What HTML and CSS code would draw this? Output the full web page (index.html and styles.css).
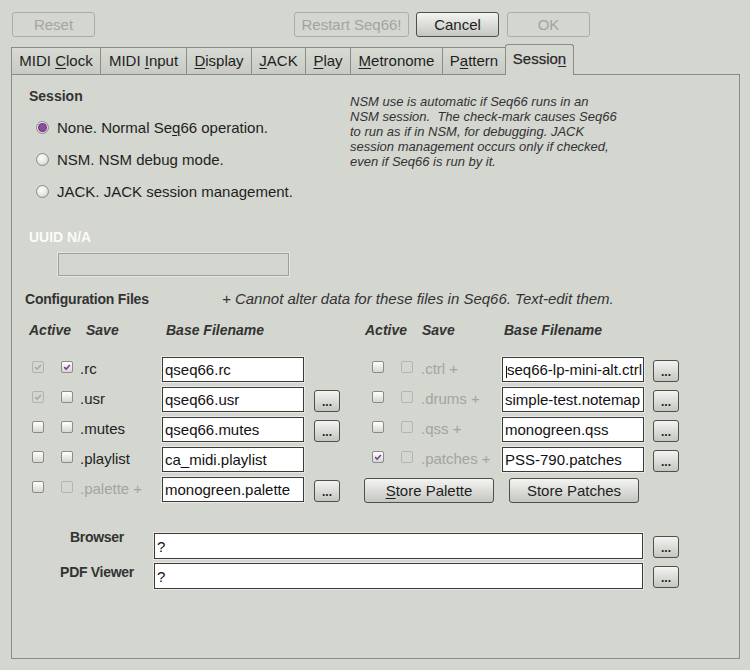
FILE: index.html
```html
<!DOCTYPE html>
<html>
<head>
<meta charset="utf-8">
<link rel="stylesheet" href="styles.css">
</head>
<body>
<div class="dialog">
  <div class="topbar">
    <div class="btn off w83">Reset</div>
    <div class="btn off restart">Restart Seq66!</div>
    <div class="btn on cancel">Cancel</div>
    <div class="btn off ok">OK</div>
  </div>
  <div class="tabs">
    <div class="tab t1"><span>MIDI <u>C</u>lock</span></div>
    <div class="tab t2"><span>MIDI <u>I</u>nput</span></div>
    <div class="tab t3"><span><u>D</u>isplay</span></div>
    <div class="tab t4"><span><u>J</u>ACK</span></div>
    <div class="tab t5"><span><u>P</u>lay</span></div>
    <div class="tab t6"><span><u>M</u>etronome</span></div>
    <div class="tab t7"><span>P<u>a</u>ttern</span></div>
    <div class="tab sel"><span>Sessio<u>n</u></span></div>
  </div>
  <div class="pane">
    <div class="session">
      <div class="sess-left">
        <div class="title">Session</div>
        <div class="radio-row"><span class="radio checked"></span><span>None. Normal Se<u>q</u>66 operation.</span></div>
        <div class="radio-row"><span class="radio"></span><span>NSM. NSM debug mode.</span></div>
        <div class="radio-row"><span class="radio"></span><span>JACK. JACK session management.</span></div>
      </div>
      <div class="note">NSM use is automatic if Seq66 runs in an<br>NSM session.&nbsp; The check-mark causes Seq66<br>to run as if in NSM, for debugging. JACK<br>session management occurs only if checked,<br>even if Seq66 is run by it.</div>
    </div>
    <div class="uuid">UUID N/A</div>
    <div class="uuid-box"></div>

    <div class="cfg-head">
      <span class="cfg-title">Configuration Files</span>
      <span class="cfg-note">+ Cannot alter data for these files in Seq66. Text-edit them.</span>
    </div>
    <div class="col-head">
      <span class="h-act">Active</span><span class="h-save">Save</span><span class="h-base">Base Filename</span>
      <span class="h-act2">Active</span><span class="h-save">Save</span><span class="h-base">Base Filename</span>
    </div>

    <div class="rows">
      <div class="row">
        <span class="cb dis chk"><svg viewBox="0 0 12 12"><path d="M2.5 6.2 L5 8.5 L9.5 3.5" /></svg></span>
        <span class="cb save chk-on"><svg viewBox="0 0 12 12"><path d="M2.5 6.2 L5 8.5 L9.5 3.5" /></svg></span>
        <span class="lbl">.rc</span>
        <span class="field">qseq66.rc</span>
        <span class="dots-ph"></span>
        <span class="cb act2"></span>
        <span class="cb save dim"></span>
        <span class="lbl2 gray">.ctrl +</span>
        <span class="field scrolled">seq66-lp-mini-alt.ctrl</span>
        <span class="dots d2">...</span>
      </div>
      <div class="row">
        <span class="cb dis chk"><svg viewBox="0 0 12 12"><path d="M2.5 6.2 L5 8.5 L9.5 3.5" /></svg></span>
        <span class="cb save"></span>
        <span class="lbl">.usr</span>
        <span class="field">qseq66.usr</span>
        <span class="dots">...</span>
        <span class="cb act2"></span>
        <span class="cb save dim"></span>
        <span class="lbl2 gray">.drums +</span>
        <span class="field">simple-test.notemap</span>
        <span class="dots d2">...</span>
      </div>
      <div class="row">
        <span class="cb"></span>
        <span class="cb save"></span>
        <span class="lbl">.mutes</span>
        <span class="field">qseq66.mutes</span>
        <span class="dots">...</span>
        <span class="cb act2"></span>
        <span class="cb save dim"></span>
        <span class="lbl2 gray">.qss +</span>
        <span class="field">monogreen.qss</span>
        <span class="dots d2">...</span>
      </div>
      <div class="row">
        <span class="cb"></span>
        <span class="cb save"></span>
        <span class="lbl">.playlist</span>
        <span class="field">ca_midi.playlist</span>
        <span class="dots-ph"></span>
        <span class="cb act2 chk-on"><svg viewBox="0 0 12 12"><path d="M2.5 6.2 L5 8.5 L9.5 3.5" /></svg></span>
        <span class="cb save dim"></span>
        <span class="lbl2 gray">.patches +</span>
        <span class="field">PSS-790.patches</span>
        <span class="dots d2">...</span>
      </div>
      <div class="row">
        <span class="cb"></span>
        <span class="cb save dim"></span>
        <span class="lbl gray">.palette +</span>
        <span class="field">monogreen.palette</span>
        <span class="dots">...</span>
        <span class="btn on store s1"><span><u>S</u>tore Palette</span></span>
        <span class="btn on store s2">Store Patches</span>
      </div>
    </div>

    <div class="app-row first">
      <span class="app-lbl">Browser</span>
      <span class="field wide">?</span>
      <span class="dots d3">...</span>
    </div>
    <div class="app-row">
      <span class="app-lbl pdf">PDF Viewer</span>
      <span class="field wide">?</span>
      <span class="dots d3">...</span>
    </div>
  </div>
</div>
</body>
</html>
```

FILE: styles.css
```css
* { box-sizing: border-box; }
html, body {
  margin: 0;
  padding: 0;
  background: #d4d6d0;
  width: 750px;
  height: 670px;
  overflow: hidden;
}
body {
  font-family: "Liberation Sans", Arial, sans-serif;
  font-size: 15px;
  color: #1e1e1e;
}
u { text-decoration-thickness: 1px; text-underline-offset: 2px; }

.topbar {
  display: flex;
  padding: 12px 0 0 12px;
  height: 37px;
}
.btn {
  display: flex;
  align-items: center;
  justify-content: center;
  height: 25px;
  border-radius: 3px;
  font-size: 15px;
}
.btn.off {
  border: 1px solid #abada9;
  color: #a3a5a1;
}
.btn.on {
  border: 1px solid #4e504c;
  background: linear-gradient(#f4f4f2, #dcddd9 50%, #c4c6c0);
  color: #1e1e1e;
}
.w83 { width: 83px; }
.restart { width: 115px; margin-left: 199px; }
.cancel { width: 83px; margin-left: 7px; }
.ok { width: 83px; margin-left: 8px; }

.tabs {
  display: flex;
  align-items: flex-end;
  margin: 7px 0 0 11px;
  height: 31px;
  margin-bottom: -1px;
  position: relative;
  z-index: 1;
}
.tab {
  height: 28px;
  display: flex;
  align-items: center;
  justify-content: center;
  border: 1px solid #8a8c88;
  border-right: none;
  background: linear-gradient(#d8dad4, #c8cac4);
  padding-bottom: 1px;
  white-space: nowrap;
}
.t1 { width: 89px; }
.t2 { width: 86px; }
.t3 { width: 65px; }
.t4 { width: 54px; }
.t5 { width: 45px; }
.t6 { width: 92px; }
.t7 { width: 63px; }
.tab.sel {
  width: 69px;
  height: 31px;
  border: 1px solid #8a8c88;
  border-bottom: none;
  border-radius: 3px 3px 0 0;
  background: #d4d6d0;
  padding-bottom: 3px;
  color: #2a2a2a;
  -webkit-text-stroke: 0.25px #2a2a2a;
}

.pane {
  margin-left: 11px;
  width: 729px;
  height: 585px;
  border: 1px solid #8a8c88;
  padding-top: 13px;
}

.session {
  display: flex;
  padding-left: 17px;
}
.sess-left { width: 321px; }
.title {
  font-size: 14px;
  font-weight: bold;
  line-height: 16px;
  color: #333;
}
.radio-row {
  display: flex;
  align-items: center;
  height: 32px;
  padding-left: 7px;
  white-space: nowrap;
}
.title + .radio-row { margin-top: 7px; }
.radio {
  width: 13px;
  height: 13px;
  flex: none;
  border-radius: 50%;
  border: 1px solid #8c8c88;
  background: radial-gradient(circle at 40% 35%, #ffffff, #e4e4e0 55%, #bdbdb9);
  margin-right: 8px;
  display: flex;
  align-items: center;
  justify-content: center;
}
.radio.checked::after {
  content: "";
  width: 7px;
  height: 7px;
  border-radius: 50%;
  background: #8e49a0;
  box-shadow: 0 0 0 1px #6e3780;
}
.note {
  padding-top: 6px;
  font-size: 13px;
  line-height: 15px;
  font-style: italic;
  color: #333;
}

.uuid {
  margin-top: 22px;
  padding-left: 17px;
  font-size: 14px;
  font-weight: bold;
  line-height: 16px;
  color: #fbfbfa;
}
.uuid-box {
  margin: 8px 0 0 46px;
  width: 231px;
  height: 23px;
  border: 1px solid #9fa19d;
  box-shadow: 0 0 0 1px #e6e7e3;
  background: #d4d6d0;
}

.cfg-head {
  display: flex;
  margin-top: 15px;
  padding-left: 13px;
  font-size: 14px;
  line-height: 16px;
  color: #333;
}
.cfg-title { font-weight: bold; width: 197px; letter-spacing: -0.2px; }
.cfg-note { font-style: italic; font-size: 15px; }

.col-head {
  display: flex;
  margin-top: 15px;
  padding-left: 17px;
  font-size: 14px;
  line-height: 16px;
  font-weight: bold;
  font-style: italic;
  color: #333;
}
.h-act { width: 57px; }
.h-save { width: 80px; }
.h-base { width: 199px; }
.h-act2 { width: 57px; }
.col-head .h-act2 + .h-save { width: 82px; }

.rows {
  margin-top: 19px;
  padding-left: 20px;
  display: flex;
  flex-direction: column;
  gap: 5px;
}
.row {
  display: flex;
  align-items: center;
  height: 25px;
  white-space: nowrap;
}
.cb {
  width: 12px;
  height: 12px;
  flex: none;
  border: 1px solid #8a8c88;
  border-radius: 2px;
  background: linear-gradient(#ffffff, #d6d7d3);
  margin-top: -5px;
  display: flex;
  align-items: center;
  justify-content: center;
}
.cb svg { width: 10px; height: 10px; }
.cb svg path {
  fill: none;
  stroke: #7a3e8e;
  stroke-width: 1.8;
}
.cb.dis {
  border-color: #b1b3af;
  background: #d4d6d0;
}
.cb.dis svg path { stroke: #a8aaa6; }
.cb.dim {
  border-color: #b3b5b1;
  background: #d4d6d0;
}
.cb.save { margin-left: 17px; }
.lbl {
  margin-left: 7px;
  width: 82px;
  color: #1e1e1e;
  margin-top: -3px;
}
.lbl2 {
  margin-left: 8px;
  width: 81px;
  margin-top: -3px;
}
.gray { color: #a3a5a1; }
.field {
  width: 142px;
  height: 25px;
  flex: none;
  background: #fff;
  border: 1px solid #3a3a3a;
  box-shadow: 0 0 0 1px #e9eae6;
  display: flex;
  align-items: center;
  padding-left: 2px;
  white-space: nowrap;
  overflow: hidden;
  color: #111;
}
.field.scrolled {
  padding-left: 3px;
}
.field.scrolled::before {
  content: "";
  width: 1px;
  height: 12px;
  margin-top: 4px;
  margin-right: 0;
  background: #111;
  flex: none;
}
.dots, .dots-ph {
  width: 26px;
  height: 22px;
  flex: none;
  margin-left: 10px;
}
.dots {
  border: 1px solid #4e504c;
  border-radius: 3px;
  background: linear-gradient(#f4f4f2, #dcddd9 50%, #c4c6c0);
  font-size: 12px;
  font-weight: bold;
  display: flex;
  align-items: flex-end;
  justify-content: center;
  padding-bottom: 4px;
  line-height: 10px;
  margin-top: 2px;
}
.act2 { margin-left: 32px; }
.dots.d2 { margin-left: 9px; }
.store { width: 130px; height: 25px; flex: none; margin-top: 1px; }
.s1 { margin-left: 24px; }
.s2 { margin-left: 15px; }

.app-row {
  display: flex;
  align-items: flex-start;
  margin-top: 4px;
  padding-left: 30px;
}
.app-row.first { margin-top: 31px; }
.app-lbl {
  width: 110px;
  margin-right: 2px;
  text-align: center;
  font-size: 14px;
  font-weight: bold;
  line-height: 16px;
  color: #333;
  margin-top: -4px;
  letter-spacing: -0.3px;
}
.app-lbl.pdf { margin-top: 1px; }
.field.wide {
  width: 489px;
  height: 26px;
}
.dots.d3 { margin-left: 10px; margin-top: 3px; }
```
